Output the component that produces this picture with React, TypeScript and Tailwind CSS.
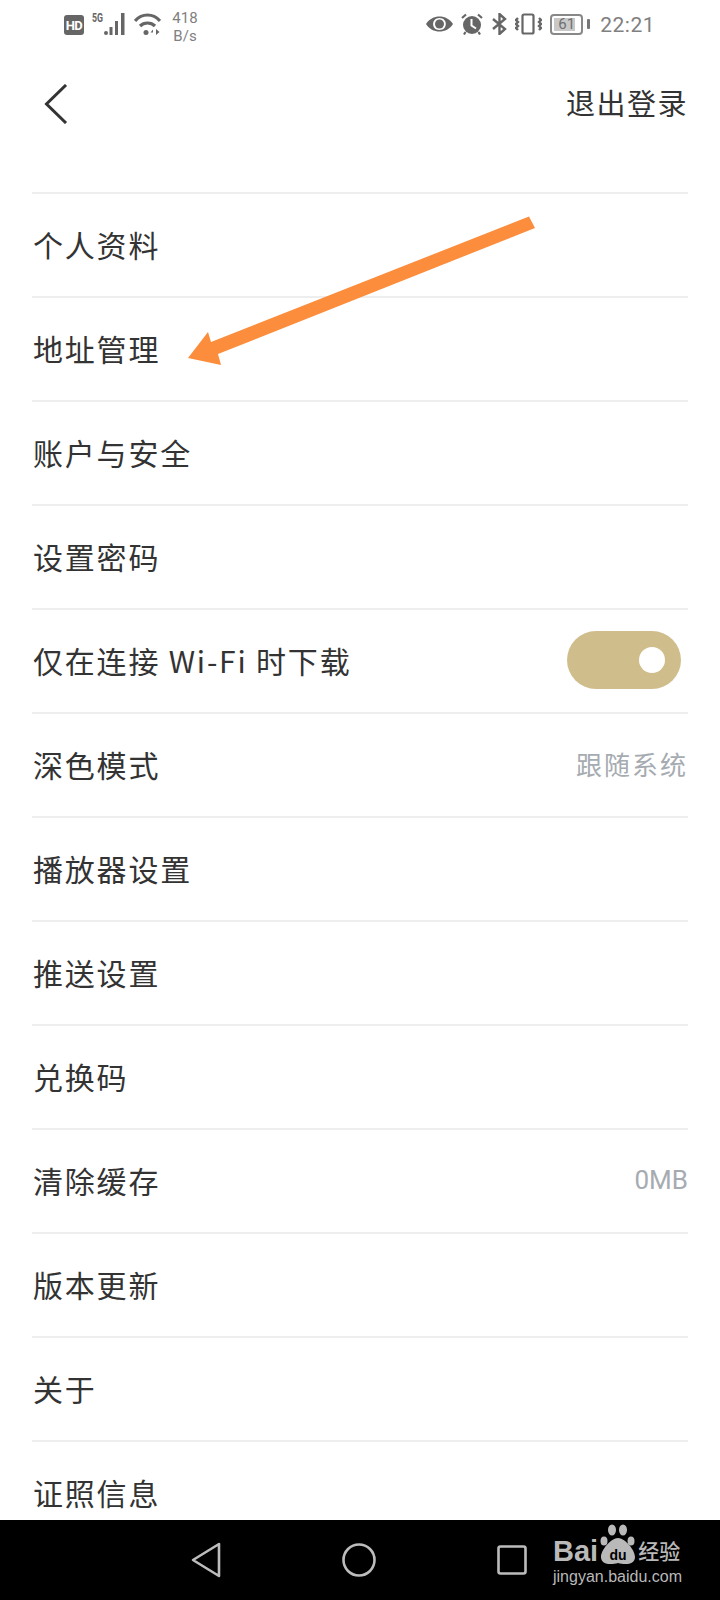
import React from "react";

const fontStack = "font-['Noto_Sans_CJK_SC','Noto_Sans',sans-serif]";

const StatusBar: React.FC = () => (
  <div className="flex h-[50px] items-start justify-between pl-[64px] pr-[65px] text-[#666]">
    {/* left group */}
    <div className="flex items-start pt-[9px]">
      <div className="mt-[6px] flex h-[20px] w-[20px] items-center justify-center rounded-[3px] bg-[#666] font-['Roboto',sans-serif] text-[13px] font-bold leading-none tracking-[-0.5px] text-white">
        HD
      </div>
      <svg width="36" height="28" viewBox="0 0 36 28" className="ml-[8px]" fill="#666">
        <text x="0" y="13" fontSize="12" fontWeight="700" fontFamily="Roboto, sans-serif" textLength="11" lengthAdjust="spacingAndGlyphs">5G</text>
        <circle cx="14" cy="24" r="2" />
        <rect x="17.500" y="18" width="3" height="8" />
        <rect x="23" y="12" width="3" height="14" />
        <rect x="29" y="4" width="3.500" height="22" />
      </svg>
      <svg width="27" height="24" viewBox="0 0 27 24" className="ml-[6px] mt-[4px]" fill="none" stroke="#666" strokeWidth="3.200">
        <path d="M1 8 C8 0 19 0 26 8" />
        <path d="M6 13 C10 9 17 9 21 13" />
        <circle cx="12" cy="19.500" r="2.500" fill="#666" stroke="none" />
        <path d="M19 16.500 L16.500 19.500 H19 V22 Z M22 16 V22 L25.500 19 Z" fill="#666" stroke="none" />
      </svg>
      <div className="ml-[11px] flex w-[26px] flex-col items-center font-['Roboto',sans-serif] text-[15px] leading-[18px] text-[#808080]">
        <span>418</span>
        <span>B/s</span>
      </div>
    </div>

    {/* right group */}
    <div className="flex items-start pt-[13px]">
      <svg width="27" height="22" viewBox="0 0 27 22" fill="#666">
        <path fillRule="evenodd" d="M0 11 C6 1 21 1 27 11 C21 21 6 21 0 11 Z M13.500 5 C5 5 5 17 13.500 17 C22 17 22 5 13.500 5 Z" />
        <circle cx="13.500" cy="11" r="4.500" />
      </svg>
      <svg width="22" height="22" viewBox="0 0 22 22" className="ml-[8px]" fill="#666">
        <circle cx="11" cy="12" r="9" />
        <path d="M10.500 6 V12.500 L15 15.500" stroke="#fff" strokeWidth="2" fill="none" />
        <path d="M1 5 L5 1.500 M21 5 L17 1.500 M4.500 19 L3 21.500 M17.500 19 L19 21.500" stroke="#666" strokeWidth="2.200" fill="none" />
      </svg>
      <svg width="15" height="22" viewBox="0 0 15 22" className="ml-[9px]" fill="none" stroke="#666" strokeWidth="2.400">
        <path d="M1 6 L13 16 L7.500 21 V1 L13 6 L1 16" />
      </svg>
      <svg width="27" height="22" viewBox="0 0 27 22" className="ml-[8px]" fill="none" stroke="#666" strokeWidth="2.400">
        <rect x="7.500" y="1.500" width="11" height="19" rx="1.500" strokeWidth="2.200" />
        <path d="M3 5 L1 7 L3 9 L1 11 L3 13 L1 15 L3 17 M24 5 L26 7 L24 9 L26 11 L24 13 L26 15 L24 17" />
      </svg>
      <div className="relative ml-[8px] mt-[1px] flex h-[21px] w-[33px] rounded-[4px] border-2 border-[#888] p-[2px]">
        <div className="h-full w-[21px] bg-[#c8c8c8]" />
        <span className="absolute inset-0 flex items-center justify-center font-['Roboto',sans-serif] text-[15px] leading-none text-[#707070]">
          61
        </span>
      </div>
      <div className="ml-[4px] mt-[6px] h-[10px] w-[3px] rounded-[1px] bg-[#777]" />
      <span className="ml-[10px] font-['Roboto',sans-serif] text-[21px] leading-[24px] tracking-[0.5px] text-[#808080]">
        22:21
      </span>
    </div>
  </div>
);

const Row: React.FC<{ label: React.ReactNode; children?: React.ReactNode }> = ({ label, children }) => (
  <div className="flex h-[104px] shrink-0 items-center justify-between border-t-2 border-[#eeeeee] pb-[2px]">
    <span className="ml-[1px] text-[30px] leading-none tracking-[1.800px] text-[#333]">{label}</span>
    {children}
  </div>
);

const Muted: React.FC<{ children: React.ReactNode }> = ({ children }) => (
  <span className="text-[26px] leading-none tracking-[2px] text-[#a6abb1]">{children}</span>
);

const App: React.FC = () => {
  const rows = ["版本更新", "关于", "证照信息"];

  return (
    <div className={`relative flex h-[1600px] w-[720px] flex-col overflow-hidden bg-white ${fontStack}`}>
      <StatusBar />

      {/* header */}
      <div className="flex h-[108px] items-center justify-between pl-[44px] pr-[32px]">
        <svg width="24" height="40" viewBox="0 0 24 40" fill="none" stroke="#333" strokeWidth="3">
          <path d="M22 1 L2.500 20 L22 39" />
        </svg>
        <span className="mb-[4px] text-[29px] leading-none tracking-[1.500px] text-[#333]">退出登录</span>
      </div>

      {/* settings list */}
      <div className="mt-[34px] flex min-h-0 flex-1 flex-col overflow-hidden px-[32px]">
        <Row label="个人资料" />
        <Row label="地址管理" />
        <Row label="账户与安全" />
        <Row label="设置密码" />
        <Row label="仅在连接 Wi-Fi 时下载">
          <div className="mr-[7px] flex h-[58px] w-[114px] items-center justify-end rounded-full bg-[#cfbd8b] pr-[16px]">
            <div className="h-[26px] w-[26px] rounded-full bg-white" />
          </div>
        </Row>
        <Row label="深色模式">
          <Muted>跟随系统</Muted>
        </Row>
        <Row label="播放器设置" />
        <Row label="推送设置" />
        <Row label="兑换码" />
        <Row label="清除缓存">
          <span className="font-['Roboto',sans-serif] text-[26px] leading-none text-[#a6abb1]">0MB</span>
        </Row>
        {rows.map((r) => (
          <Row key={r} label={r} />
        ))}
      </div>

      {/* nav bar */}
      <div className="flex h-[80px] shrink-0 items-center justify-start bg-black pl-[191px]">
        <div className="flex items-center gap-[121px]">
          <svg width="30" height="36" viewBox="0 0 30 36" fill="none" stroke="#bcbcbc" strokeWidth="2.600" strokeLinejoin="round">
            <path d="M28 2 V34 L2 18 Z" />
          </svg>
          <svg width="34" height="34" viewBox="0 0 34 34" fill="none" stroke="#bcbcbc" strokeWidth="2.600">
            <circle cx="17" cy="17" r="15.500" />
          </svg>
          <svg width="30" height="30" viewBox="0 0 30 30" fill="none" stroke="#bcbcbc" strokeWidth="2.600">
            <rect x="1.500" y="1.500" width="27" height="27" rx="2" />
          </svg>
        </div>
      </div>

      {/* arrow annotation drawn over the list */}
      <svg width="720" height="1600" viewBox="0 0 720 1600" className="pointer-events-none absolute inset-0" fill="#fb8d3d">
        <path d="M529 216.500 L535 228 L218 354 L221 365 L188 358 L208 332 L211 342 Z" />
      </svg>

      {/* baidu watermark */}
      <div className="absolute left-[553px] top-[1523px] flex w-[140px] flex-col text-[#b9b9b9]">
        <div className="flex h-[42px] items-end">
          <span className="font-['Liberation_Sans',sans-serif] text-[29px] font-bold leading-[28px]">Bai</span>
          <svg width="38" height="41" viewBox="0 0 38 41" className="ml-[1px] shrink-0" fill="#b9b9b9">
            <ellipse cx="5" cy="17" rx="3.500" ry="4.500" />
            <ellipse cx="13" cy="6" rx="4" ry="5.500" />
            <ellipse cx="24" cy="6" rx="4" ry="5.500" />
            <ellipse cx="32" cy="17" rx="3.500" ry="4.500" />
            <path d="M19 14 C26 14 36 26 36 33 C36 41 26 41 19 39 C12 41 2 41 2 33 C2 26 12 14 19 14 Z" />
            <text x="19" y="36" textAnchor="middle" fontSize="14" fontWeight="700" fontFamily="Liberation Sans, sans-serif" fill="#000">du</text>
          </svg>
          <span className="ml-[1px] text-[21px] font-medium leading-[30px]">经验</span>
        </div>
        <span className="mt-[1px] font-['Liberation_Sans',sans-serif] text-[16px] leading-[22px]">jingyan.baidu.com</span>
      </div>
    </div>
  );
};

export default App;
